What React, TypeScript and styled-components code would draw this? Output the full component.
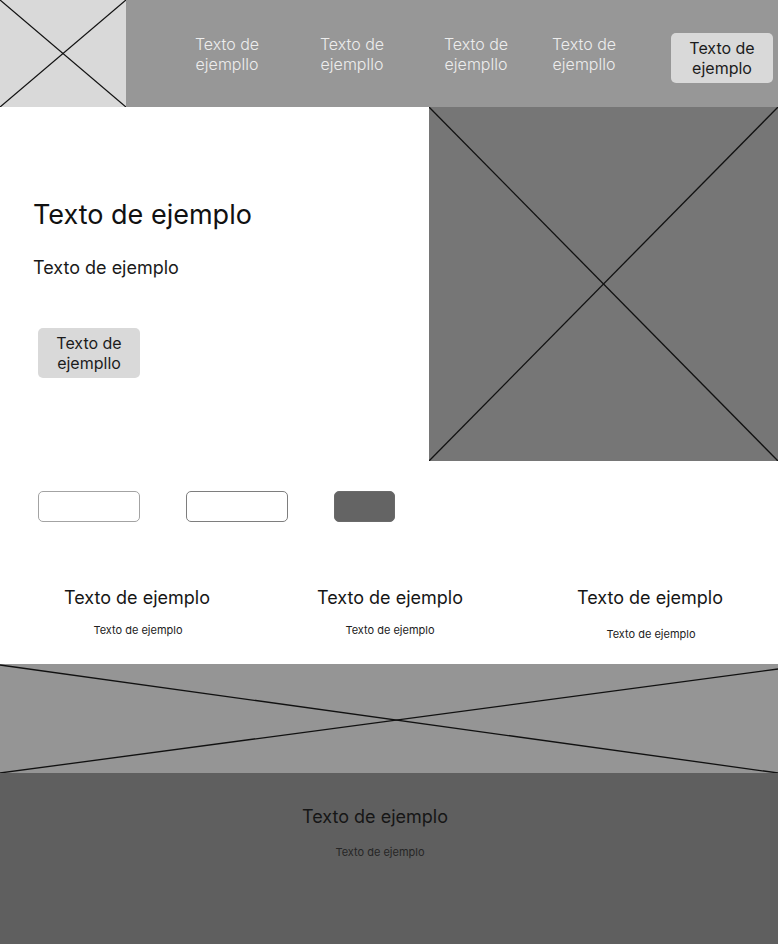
import React from "react";
import styled, { createGlobalStyle } from "styled-components";

const Global = createGlobalStyle`
  html, body { margin: 0; padding: 0; background: #ffffff; }
  body { font-family: Inter, "Noto Sans", "Liberation Sans", sans-serif; }
  * { box-sizing: border-box; }
`;

const Page = styled.div`
  width: 778px;
  display: flex;
  flex-direction: column;
`;

const Header = styled.header`
  height: 107px;
  display: flex;
  align-items: center;
  background: #979797;
`;

const Placeholder = styled.div<{ $bg: string; $w?: string; $h: string }>`
  position: relative;
  width: ${(p) => p.$w ?? "100%"};
  height: ${(p) => p.$h};
  background: ${(p) => p.$bg};
  flex-shrink: 0;
  svg {
    position: absolute;
    inset: 0;
    width: 100%;
    height: 100%;
  }
`;

const NavItem = styled.a<{ $offset: number }>`
  width: 70px;
  margin-left: ${(p) => p.$offset}px;
  color: #ededed;
  font-size: 16px;
  font-weight: 300;
  line-height: 20px;
  text-align: center;
  text-decoration: none;
`;

const GreyButton = styled.button<{ $offset?: number; $top?: number }>`
  width: 102px;
  height: 50px;
  margin: ${(p) => p.$top ?? 0}px 0 0 ${(p) => p.$offset ?? 0}px;
  border: none;
  border-radius: 5px;
  background: #d9d9d9;
  color: #1c1c1c;
  font-family: inherit;
  font-size: 16px;
  line-height: 20px;
  text-align: center;
  padding: 0;
  flex-shrink: 0;
`;

const Hero = styled.section`
  display: grid;
  grid-template-columns: 429px 349px;
  height: 354px;
`;

const HeroText = styled.div`
  display: flex;
  flex-direction: column;
  align-items: flex-start;
  padding: 91px 0 0 33px;
`;

const HeroTitle = styled.h1`
  margin: 0;
  font-size: 27px;
  line-height: 33px;
  font-weight: 400;
  color: #111111;
`;

const HeroSub = styled.p`
  margin: 26px 0 49px;
  font-size: 18px;
  line-height: 22px;
  color: #1a1a1a;
`;

const FieldRow = styled.div`
  display: flex;
  gap: 46px;
  padding: 30px 0 0 38px;
`;

const Field = styled.div<{ $w: number; $border: string; $fill: string }>`
  width: ${(p) => p.$w}px;
  height: 31px;
  border-radius: 5px;
  border: 1px solid ${(p) => p.$border};
  background: ${(p) => p.$fill};
`;

const Features = styled.section`
  display: grid;
  grid-template-columns: 274px 232px 272px;
  padding-top: 65px;
  height: 142px;
`;

const Feature = styled.div<{ $shift?: number }>`
  display: flex;
  flex-direction: column;
  align-items: center;
  padding-left: ${(p) => p.$shift ?? 0}px;
`;

const FeatureTitle = styled.h3`
  margin: 0;
  font-size: 18px;
  line-height: 22px;
  font-weight: 400;
  color: #161616;
`;

const SmallText = styled.p<{ $top: number; $shift?: number; $color?: string }>`
  margin: ${(p) => p.$top}px 0 0;
  padding-left: ${(p) => p.$shift ?? 0}px;
  font-size: 11px;
  line-height: 14px;
  color: ${(p) => p.$color ?? "#222222"};
`;

const Footer = styled.footer`
  height: 171px;
  background: #5f5f5f;
  display: flex;
  flex-direction: column;
  align-items: center;
  padding: 33px 28px 0 0;
`;

const FooterTitle = styled.h4`
  margin: 0;
  font-size: 18px;
  line-height: 22px;
  font-weight: 400;
  color: #161616;
`;

const Cross = () => (
  <svg viewBox="0 0 100 100" preserveAspectRatio="none">
    <line x1="0" y1="0" x2="100" y2="100" stroke="#111" strokeWidth="1.3" vectorEffect="non-scaling-stroke" />
    <line x1="0" y1="100" x2="100" y2="0" stroke="#111" strokeWidth="1.3" vectorEffect="non-scaling-stroke" />
  </svg>
);

const BannerCross = () => (
  <svg viewBox="0 0 778 109" preserveAspectRatio="none">
    <line x1="0" y1="1" x2="778" y2="109" stroke="#111" strokeWidth="1.3" vectorEffect="non-scaling-stroke" />
    <line x1="0" y1="109" x2="778" y2="5" stroke="#111" strokeWidth="1.3" vectorEffect="non-scaling-stroke" />
  </svg>
);

const TwoLine = ({ a, b }: { a: string; b: string }) => (
  <>
    {a}
    <br />
    {b}
  </>
);

export default function App() {
  const nav = [66, 55, 54, 38];
  return (
    <>
      <Global />
      <Page>
        <Header>
          <Placeholder $bg="#d9d9d9" $w="126px" $h="107px">
            <Cross />
          </Placeholder>
          {nav.map((o, i) => (
            <NavItem key={i} $offset={o} href="#">
              <TwoLine a="Texto de" b="ejempllo" />
            </NavItem>
          ))}
          <GreyButton $offset={52} $top={8}>
            <TwoLine a="Texto de" b="ejemplo" />
          </GreyButton>
        </Header>

        <Hero>
          <HeroText>
            <HeroTitle>Texto de ejemplo</HeroTitle>
            <HeroSub>Texto de ejemplo</HeroSub>
            <GreyButton $offset={5}>
              <TwoLine a="Texto de" b="ejempllo" />
            </GreyButton>
          </HeroText>
          <Placeholder $bg="#767676" $h="354px">
            <Cross />
          </Placeholder>
        </Hero>

        <FieldRow>
          <Field $w={102} $border="#a3a3a3" $fill="#ffffff" />
          <Field $w={102} $border="#7e7e7e" $fill="#ffffff" />
          <Field $w={61} $border="#6a6a6a" $fill="#646464" />
        </FieldRow>

        <Features>
          <Feature>
            <FeatureTitle>Texto de ejemplo</FeatureTitle>
            <SmallText $top={14} $shift={2}>Texto de ejemplo</SmallText>
          </Feature>
          <Feature>
            <FeatureTitle>Texto de ejemplo</FeatureTitle>
            <SmallText $top={14}>Texto de ejemplo</SmallText>
          </Feature>
          <Feature $shift={16}>
            <FeatureTitle>Texto de ejemplo</FeatureTitle>
            <SmallText $top={18} $shift={2}>Texto de ejemplo</SmallText>
          </Feature>
        </Features>

        <Placeholder $bg="#959595" $h="109px">
          <BannerCross />
        </Placeholder>

        <Footer>
          <FooterTitle>Texto de ejemplo</FooterTitle>
          <SmallText $top={17} $shift={10} $color="#262626">
            Texto de ejemplo
          </SmallText>
        </Footer>
      </Page>
    </>
  );
}
